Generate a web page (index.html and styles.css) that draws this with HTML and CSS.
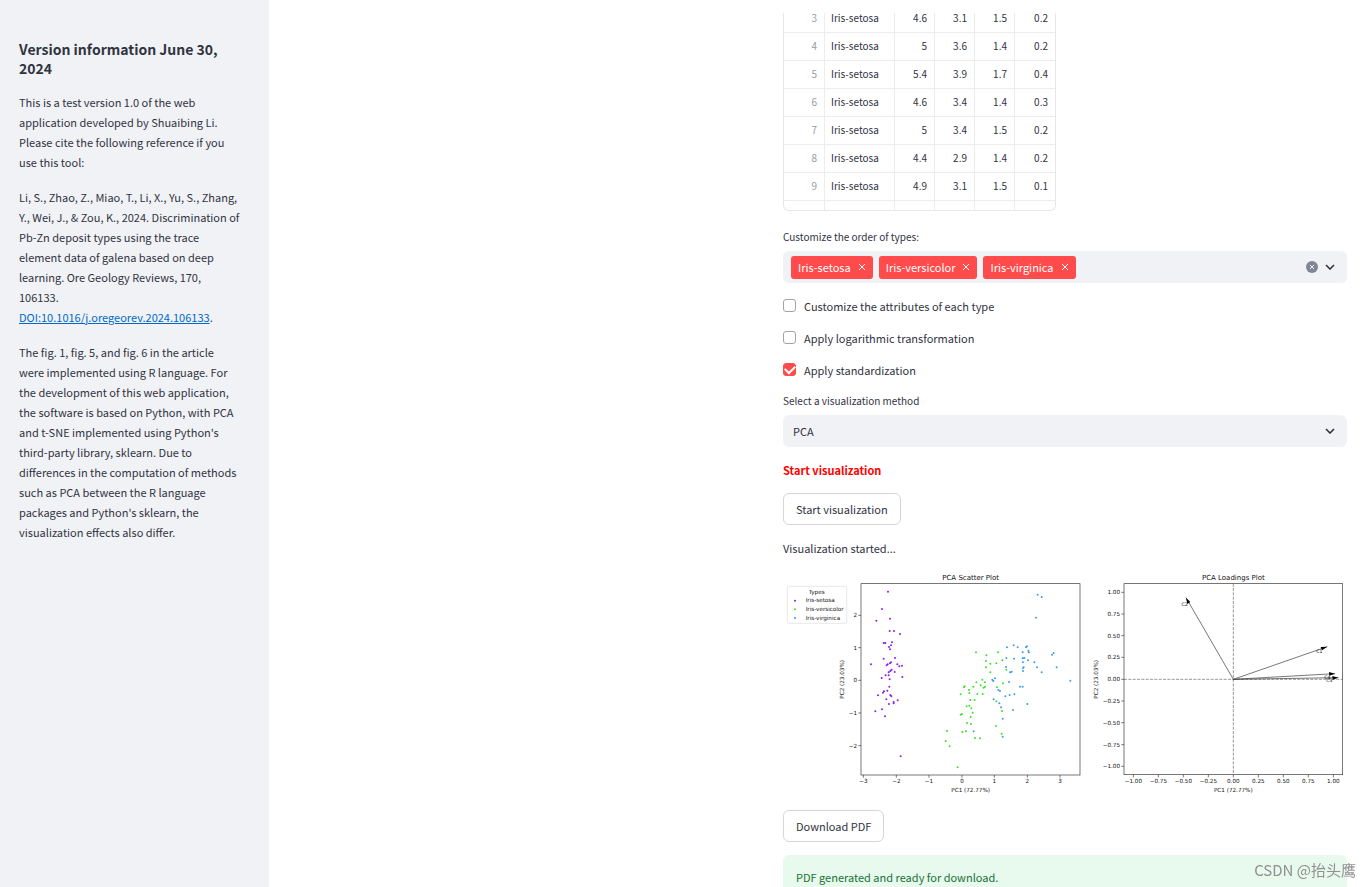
FILE: index.html
```
<!DOCTYPE html>
<html lang="en">
<head>
  <meta charset="UTF-8" />
  <meta name="viewport" content="width=device-width, initial-scale=1.0"/>
  <title>PCA Visualization</title>
  <link rel="stylesheet" href="styles.css">
</head>
<body>

  <aside class="sidebar">
    <h3>Version information June 30, 2024</h3>
    <p>This is a test version 1.0 of the web application developed by Shuaibing Li. Please cite the following reference if you use this tool:</p>
    <p>Li, S., Zhao, Z., Miao, T., Li, X., Yu, S., Zhang, Y., Wei, J., &amp; Zou, K., 2024. Discrimination of Pb-Zn deposit types using the trace element data of galena based on deep learning. Ore Geology Reviews, 170, 106133. <a href="#">DOI:10.1016/j.oregeorev.2024.106133</a>.</p>
    <p>The fig. 1, fig. 5, and fig. 6 in the article were implemented using R language. For the development of this web application, the software is based on Python, with PCA and t-SNE implemented using Python's third-party library, sklearn. Due to differences in the computation of methods such as PCA between the R language packages and Python's sklearn, the visualization effects also differ.</p>
  </aside>

  <main class="main">
    <div class="column"></div>
    <div class="column">

      <div class="dataframe">
        <table>
          <tbody>
            <tr><th>3</th><td>Iris-setosa</td><td>4.6</td><td>3.1</td><td>1.5</td><td>0.2</td></tr>
            <tr><th>4</th><td>Iris-setosa</td><td>5</td><td>3.6</td><td>1.4</td><td>0.2</td></tr>
            <tr><th>5</th><td>Iris-setosa</td><td>5.4</td><td>3.9</td><td>1.7</td><td>0.4</td></tr>
            <tr><th>6</th><td>Iris-setosa</td><td>4.6</td><td>3.4</td><td>1.4</td><td>0.3</td></tr>
            <tr><th>7</th><td>Iris-setosa</td><td>5</td><td>3.4</td><td>1.5</td><td>0.2</td></tr>
            <tr><th>8</th><td>Iris-setosa</td><td>4.4</td><td>2.9</td><td>1.4</td><td>0.2</td></tr>
            <tr><th>9</th><td>Iris-setosa</td><td>4.9</td><td>3.1</td><td>1.5</td><td>0.1</td></tr>
            <tr class="spacer"><th></th><td></td><td></td><td></td><td></td><td></td></tr>
          </tbody>
        </table>
      </div>

      <div class="field">
        <label class="field-label" for="typeOrder">Customize the order of types:</label>
        <div class="multiselect">
          <span class="tag">Iris-setosa
            <button aria-label="Remove Iris-setosa"><svg viewBox="0 0 8 8"><path d="M1 1l6 6M7 1L1 7"/></svg></button>
          </span>
          <span class="tag">Iris-versicolor
            <button aria-label="Remove Iris-versicolor"><svg viewBox="0 0 8 8"><path d="M1 1l6 6M7 1L1 7"/></svg></button>
          </span>
          <span class="tag">Iris-virginica
            <button aria-label="Remove Iris-virginica"><svg viewBox="0 0 8 8"><path d="M1 1l6 6M7 1L1 7"/></svg></button>
          </span>
          <input type="text" id="typeOrder">
          <button class="clear-btn" aria-label="Clear all">
            <svg viewBox="0 0 12 12"><circle cx="6" cy="6" r="6"/><path d="M4 4l4 4M8 4L4 8"/></svg>
          </button>
          <svg class="chevron" viewBox="0 0 10 6"><path d="M1 1l4 4 4-4"/></svg>
        </div>
      </div>

      <label class="checkbox"><input type="checkbox">Customize the attributes of each type</label>
      <label class="checkbox"><input type="checkbox">Apply logarithmic transformation</label>
      <label class="checkbox"><input type="checkbox" checked>Apply standardization</label>

      <div class="field">
        <label class="field-label" for="method">Select a visualization method</label>
        <div class="select">
          <select id="method">
            <option>PCA</option>
            <option>t-SNE</option>
          </select>
          <svg class="chevron" viewBox="0 0 10 6"><path d="M1 1l4 4 4-4"/></svg>
        </div>
      </div>

      <p class="step">Start visualization</p>
      <button class="btn">Start visualization</button>
      <p>Visualization started...</p>

      <svg class="figure" viewBox="0 9 1692 678">
        <!-- scatter plot -->
        <text class="title" x="563" y="36">PCA Scatter Plot</text>
        <rect class="frame" x="234" y="47" width="657" height="574"/>
        <path class="tick" d="M241 621v8M340 621v8M438 621v8M537 621v8M634 621v8M733 621v8M831 621v8M234 142h-8M234 239h-8M234 337h-8M234 435h-8M234 533h-8"/>
        <g class="x-labels">
          <text x="241" y="646">−3</text>
          <text x="340" y="646">−2</text>
          <text x="438" y="646">−1</text>
          <text x="537" y="646">0</text>
          <text x="634" y="646">1</text>
          <text x="733" y="646">2</text>
          <text x="831" y="646">3</text>
          <text x="563" y="671">PC1 (72.77%)</text>
          <text transform="translate(184 334) rotate(-90)">PC2 (23.03%)</text>
        </g>
        <g class="y-labels">
          <text x="222" y="148">2</text>
          <text x="222" y="245">1</text>
          <text x="222" y="343">0</text>
          <text x="222" y="441">−1</text>
          <text x="222" y="539">−2</text>
        </g>
        <path class="dots setosa" d="M315 71h0M297 123h0M321 152h0M280 158h0M320 189h0M333 189h0M351 198h0M302 225h0M307 225h0M327 223h0M324 232h0M318 237h0M321 244h0M302 272h0M336 270h0M264 289h0M311 292h0M314 289h0M321 286h0M324 283h0M343 289h0M349 295h0M357 293h0M326 305h0M322 309h0M317 313h0M335 312h0M308 322h0M317 322h0M296 330h0M358 327h0M320 334h0M319 356h0M313 368h0M303 370h0M300 374h0M285 382h0M322 381h0M325 385h0M310 394h0M344 397h0M332 402h0M332 406h0M318 408h0M297 424h0M277 430h0M306 445h0M353 565h0"/>
        <path class="dots versicolor" d="M579 253h0M610 262h0M645 253h0M609 279h0M658 277h0M622 287h0M640 286h0M609 298h0M670 305h0M622 313h0M598 335h0M580 343h0M606 343h0M660 346h0M593 352h0M606 356h0M602 359h0M571 356h0M545 355h0M543 358h0M642 358h0M558 366h0M559 375h0M533 379h0M583 378h0M599 378h0M562 396h0M575 396h0M640 400h0M551 415h0M559 413h0M565 421h0M657 429h0M569 434h0M533 440h0M537 438h0M563 447h0M552 465h0M564 468h0M639 474h0M538 492h0M549 490h0M656 497h0M492 489h0M488 519h0M500 535h0M576 510h0M591 511h0M524 598h0"/>
        <path class="dots virginica" d="M764 80h0M776 87h0M759 149h0M692 232h0M672 238h0M704 238h0M732 235h0M729 238h0M736 248h0M738 253h0M719 253h0M812 255h0M807 260h0M670 270h0M693 272h0M719 271h0M724 270h0M735 277h0M720 283h0M754 283h0M669 297h0M722 298h0M720 300h0M762 298h0M821 298h0M720 309h0M681 313h0M686 311h0M776 313h0M636 331h0M628 335h0M631 339h0M678 342h0M862 338h0M711 356h0M719 356h0M646 366h0M651 369h0M694 379h0M680 381h0M667 385h0M632 394h0M649 406h0M654 418h0M733 408h0M690 426h0M659 452h0M572 490h0M659 506h0"/>

        <!-- legend -->
        <rect class="legend" x="13" y="55" width="178" height="111" rx="4"/>
        <text class="x-labels" x="101" y="77">Types</text>
        <text x="68" y="103">Iris-setosa</text>
        <text x="68" y="129">Iris-versicolor</text>
        <text x="68" y="155">Iris-virginica</text>
        <path class="dots setosa" d="M36 98h0"/>
        <path class="dots versicolor" d="M36 124h0"/>
        <path class="dots virginica" d="M36 150h0"/>

        <!-- loadings plot -->
        <text class="title" x="1351" y="36">PCA Loadings Plot</text>
        <path class="axis" d="M1023 334h656M1351 47v573"/>
        <rect class="frame" x="1023" y="47" width="656" height="573"/>
        <path class="tick" d="M1051 620v8M1126 620v8M1201 620v8M1276 620v8M1351 620v8M1426 620v8M1501 620v8M1576 620v8M1651 620v8M1023 73h-8M1023 138h-8M1023 203h-8M1023 268h-8M1023 334h-8M1023 399h-8M1023 464h-8M1023 530h-8M1023 595h-8"/>
        <g class="x-labels">
          <text x="1051" y="646">−1.00</text>
          <text x="1126" y="646">−0.75</text>
          <text x="1201" y="646">−0.50</text>
          <text x="1276" y="646">−0.25</text>
          <text x="1351" y="646">0.00</text>
          <text x="1426" y="646">0.25</text>
          <text x="1501" y="646">0.50</text>
          <text x="1576" y="646">0.75</text>
          <text x="1651" y="646">1.00</text>
          <text x="1351" y="671">PC1 (72.77%)</text>
          <text transform="translate(946 334) rotate(-90)">PC2 (23.03%)</text>
        </g>
        <g class="y-labels">
          <text x="1011" y="79">1.00</text>
          <text x="1011" y="144">0.75</text>
          <text x="1011" y="209">0.50</text>
          <text x="1011" y="274">0.25</text>
          <text x="1011" y="340">0.00</text>
          <text x="1011" y="405">−0.25</text>
          <text x="1011" y="470">−0.50</text>
          <text x="1011" y="536">−0.75</text>
          <text x="1011" y="601">−1.00</text>
        </g>
        <path class="arrow" d="M1351 334L1209 89M1351 334L1633 236M1351 334L1656 317M1351 334L1666 329"/>
        <path class="head" d="M1209 89l4 19 9-6zM1633 236l-20 1 4 10zM1656 317l-18-5 1 11zM1666 329l-18-5 1 11z"/>
        <g class="vector-labels">
          <text x="1205" y="115">C2</text>
          <text x="1609" y="254">C1</text>
          <text x="1633" y="332">C4</text>
          <text x="1639" y="341">C3</text>
        </g>
      </svg>

      <button class="btn">Download PDF</button>
      <div class="alert">PDF generated and ready for download.</div>
    </div>
  </main>

  <div class="watermark">CSDN @抬头鹰</div>

</body>
</html>
```
FILE: styles.css
```
* {
  box-sizing: border-box;
}

body {
  display: flex;
  height: 100vh;
  margin: 0;
  overflow: hidden;
  background-color: #fff;
  color: #31333f;
  font-family: "Noto Sans CJK SC", sans-serif;
  font-size: 11px;
  line-height: 20px;
}

p {
  margin: 0;
}

button, input, select {
  font: inherit;
  color: inherit;
}

button {
  cursor: pointer;
}

.sidebar {
  flex: 0 0 269px;
  padding: 40px 28px 40px 19px;
  background-color: #f0f2f6;
}

.sidebar h3 {
  margin: 0 0 14px;
  font-size: 14px;
  line-height: 19px;
}

.sidebar p {
  margin-bottom: 15px;
}

.sidebar a {
  color: #0068c9;
}

.main {
  flex: 1;
  display: grid;
  grid-template-columns: 5fr 6fr;
  gap: 20px;
  min-width: 0;
  padding: 13px 24px 0;
}

.column {
  display: flex;
  flex-direction: column;
  align-items: flex-start;
  gap: 13px;
  min-width: 0;
}

/* data table, scrolled to its end */
.dataframe {
  display: flex;
  align-items: flex-end;
  height: 198px;
  margin-bottom: 4px;
  overflow: hidden;
  border: 1px solid #e6e7ea;
  border-top: none;
  border-radius: 0 0 6px 6px;
  font-size: 10px;
  line-height: 10px;
}

table {
  width: 271px;
  table-layout: fixed;
  border-collapse: separate;
  border-spacing: 0;
}

th, td {
  width: 40px;
  height: 28px;
  padding: 0 7px 1px;
  border-right: 1px solid #ececef;
  border-bottom: 1px solid #ececef;
  font-weight: normal;
  text-align: right;
}

th {
  width: 41px;
  color: #9a9ba2;
}

td:nth-child(2) {
  width: 70px;
  padding: 0 6px 1px;
  text-align: left;
}

td:last-child {
  border-right: none;
}

.spacer th, .spacer td {
  height: 9px;
  border-bottom: none;
}

.field {
  width: 100%;
}

.field-label {
  display: block;
  margin-bottom: 5px;
  font-size: 10px;
  line-height: 18px;
}

.multiselect {
  display: flex;
  align-items: center;
  gap: 6px;
  height: 32px;
  padding: 0 12px 0 8px;
  border-radius: 6px;
  background-color: #f0f2f6;
}

.multiselect input {
  flex: 1;
  min-width: 0;
  border: none;
  outline: none;
  background: none;
}

.tag {
  display: flex;
  align-items: center;
  gap: 7px;
  height: 23px;
  padding: 0 7px;
  border-radius: 3px;
  background-color: #ff4b4b;
  color: #fff;
}

.multiselect button {
  display: flex;
  padding: 0;
  border: none;
  background: none;
}

.tag svg {
  width: 8px;
  height: 8px;
  fill: none;
  stroke: #fff;
}

.clear-btn svg {
  width: 12px;
  height: 12px;
  fill: #808495;
  stroke: #f0f2f6;
}

.clear-btn circle {
  stroke: none;
}

.multiselect .clear-btn {
  margin-right: 1px;
}

.chevron {
  width: 10px;
  height: 6px;
  fill: none;
  stroke: #31333f;
  stroke-width: 1.6;
}

.checkbox {
  display: flex;
  align-items: center;
  gap: 8px;
  height: 19px;
}

.checkbox input {
  display: grid;
  place-items: center;
  width: 13px;
  height: 13px;
  margin: 0;
  border: 1px solid #a3a4ab;
  border-radius: 3px;
  appearance: none;
}

.checkbox input:checked {
  border-color: #ff4b4b;
  background-color: #ff4b4b;
}

.checkbox input:checked::after {
  content: "";
  width: 8px;
  height: 5px;
  margin-bottom: 2px;
  border: solid #fff;
  border-width: 0 0 2px 2px;
  transform: rotate(-45deg);
}

.select {
  display: grid;
  align-items: center;
}

.select select, .select .chevron {
  grid-area: 1 / 1;
}

.select select {
  width: 100%;
  height: 32px;
  padding: 0 10px;
  border: none;
  border-radius: 6px;
  background-color: #f0f2f6;
  appearance: none;
}

.select .chevron {
  justify-self: end;
  margin-right: 12px;
  pointer-events: none;
}

.step {
  color: #f00;
  font-weight: bold;
}

.btn {
  height: 32px;
  padding: 0 12px;
  border: 1px solid #d5d6d9;
  border-radius: 6px;
  background-color: #fff;
}

.figure {
  display: block;
  width: 100%;
  font-family: "DejaVu Sans", sans-serif;
  font-size: 17px;
}

.figure text {
  fill: #111;
}

.figure .title {
  font-size: 21px;
  text-anchor: middle;
}

.x-labels, .vector-labels {
  text-anchor: middle;
}

.y-labels {
  text-anchor: end;
}

.vector-labels {
  font-size: 14px;
}

.frame, .tick, .axis, .arrow {
  fill: none;
  stroke: #333;
  stroke-width: 2;
}

.axis {
  stroke: #666;
  stroke-dasharray: 9 4;
}

.head {
  fill: #000;
}

.legend {
  fill: #fff;
  stroke: #ddd;
  stroke-width: 2;
}

.dots {
  fill: none;
  stroke-width: 6;
  stroke-linecap: round;
}

.setosa {
  stroke: #8b1cf5;
}

.versicolor {
  stroke: #3be22c;
}

.virginica {
  stroke: #3f9af0;
}

.alert {
  width: 100%;
  padding: 12px 13px;
  border-radius: 6px;
  background-color: #e8f9ee;
  color: #177233;
}

.watermark {
  position: fixed;
  right: 15px;
  bottom: 6px;
  color: #909090;
  font-size: 15px;
  line-height: 22px;
}
```
